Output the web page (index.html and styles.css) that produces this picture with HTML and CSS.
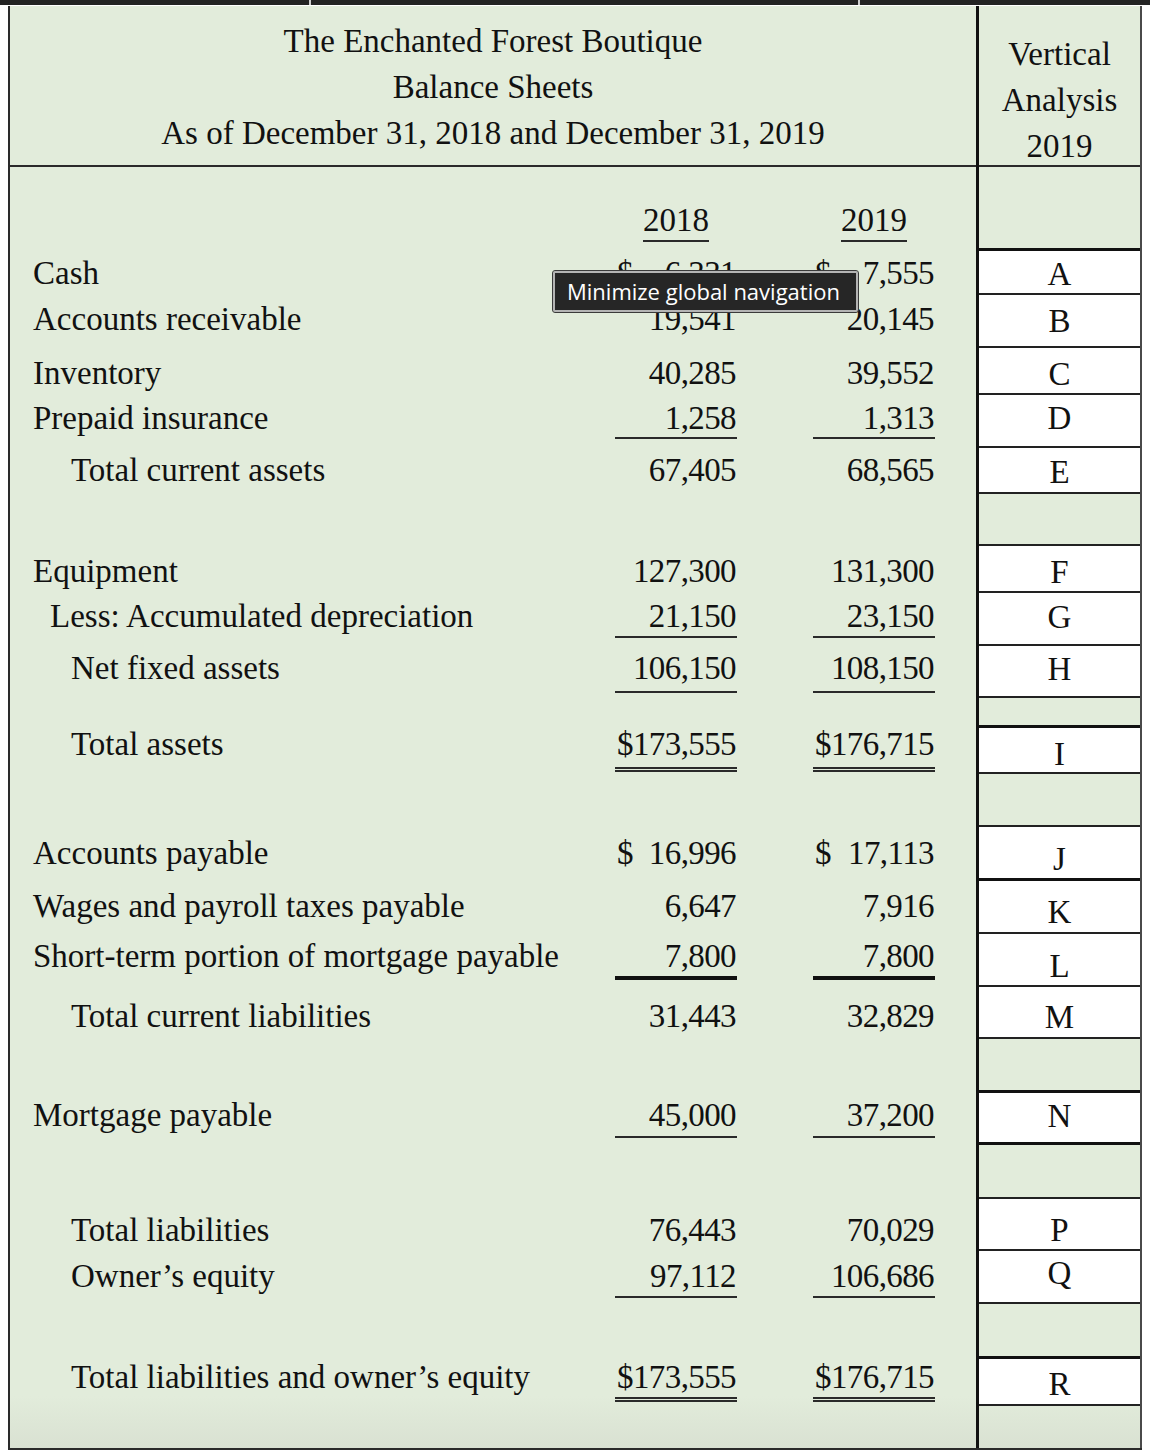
FILE: index.html
```html
<!DOCTYPE html>
<html lang="en">
<head>
<meta charset="utf-8">
<title>The Enchanted Forest Boutique – Balance Sheets</title>
<link rel="stylesheet" href="styles.css">
</head>
<body>
<div class="topbar"><div class="seg s1"></div><div class="seg s2"></div><div class="seg s3"></div></div>
<div class="sheet">
  <div class="main">
    <div class="head">
      <div>The Enchanted Forest Boutique</div>
      <div>Balance Sheets</div>
      <div>As of December 31, 2018 and December 31, 2019</div>
    </div>
    <div class="body">
      <div class="row mt35"><div class="year y18"><span>2018</span></div><div class="year y19"><span>2019</span></div></div>

      <div class="row mt14"><div class="label">Cash</div><div class="num y18 dl"><span>$</span><span>6,331</span></div><div class="num y19 dl"><span>$</span><span>7,555</span></div></div>
      <div class="row mt7"><div class="label">Accounts receivable</div><div class="num y18">19,541</div><div class="num y19">20,145</div></div>
      <div class="row mt15"><div class="label">Inventory</div><div class="num y18">40,285</div><div class="num y19">39,552</div></div>
      <div class="row mt6"><div class="label">Prepaid insurance</div><div class="num y18 ul pb1">1,258</div><div class="num y19 ul pb1">1,313</div></div>
      <div class="row mt13"><div class="label ind">Total current assets</div><div class="num y18">67,405</div><div class="num y19">68,565</div></div>

      <div class="row mt62"><div class="label">Equipment</div><div class="num y18">127,300</div><div class="num y19">131,300</div></div>
      <div class="row mt6"><div class="label ind-s">Less: Accumulated depreciation</div><div class="num y18 ul pb2">21,150</div><div class="num y19 ul pb2">23,150</div></div>
      <div class="row mt13"><div class="label ind">Net fixed assets</div><div class="num y18 ul pb5">106,150</div><div class="num y19 ul pb5">108,150</div></div>
      <div class="row mt37"><div class="label ind">Total assets</div><div class="num y18 dbl pb5">$173,555</div><div class="num y19 dbl pb5">$176,715</div></div>

      <div class="row mt70"><div class="label">Accounts payable</div><div class="num y18 dl"><span>$</span><span>16,996</span></div><div class="num y19 dl"><span>$</span><span>17,113</span></div></div>
      <div class="row mt14"><div class="label">Wages and payroll taxes payable</div><div class="num y18">6,647</div><div class="num y19">7,916</div></div>
      <div class="row mt11"><div class="label">Short-term portion of mortgage payable</div><div class="num y18 thick pb2">7,800</div><div class="num y19 thick pb2">7,800</div></div>
      <div class="row mt21"><div class="label ind">Total current liabilities</div><div class="num y18">31,443</div><div class="num y19">32,829</div></div>

      <div class="row mt60"><div class="label">Mortgage payable</div><div class="num y18 ul pb3">45,000</div><div class="num y19 ul pb3">37,200</div></div>

      <div class="row mt76"><div class="label ind">Total liabilities</div><div class="num y18">76,443</div><div class="num y19">70,029</div></div>
      <div class="row mt7"><div class="label ind">Owner’s equity</div><div class="num y18 ul pb2">97,112</div><div class="num y19 ul pb2">106,686</div></div>
      <div class="row mt62"><div class="label ind">Total liabilities and owner’s equity</div><div class="num y18 dbl pb2">$173,555</div><div class="num y19 dbl pb2">$176,715</div></div>
    </div>
  </div>

  <div class="va">
    <div class="va-head">
      <div>Vertical</div>
      <div>Analysis</div>
      <div>2019</div>
    </div>
    <div class="cell green thick-b"></div>
    <div class="cell pt5">A</div>
    <div class="cell pt8">B</div>
    <div class="cell pt8">C</div>
    <div class="cell pt5">D</div>
    <div class="cell pt6">E</div>
    <div class="cell green"></div>
    <div class="cell pt8">F</div>
    <div class="cell pt6">G</div>
    <div class="cell pt5">H</div>
    <div class="cell green thick-b"></div>
    <div class="cell pt8">I</div>
    <div class="cell green"></div>
    <div class="cell pt14 thick-b">J</div>
    <div class="cell pt13">K</div>
    <div class="cell pt14">L</div>
    <div class="cell pt12">M</div>
    <div class="cell green thick-b"></div>
    <div class="cell pt5 thick-b">N</div>
    <div class="cell green"></div>
    <div class="cell pt13">P</div>
    <div class="cell pt4">Q</div>
    <div class="cell green thick-b"></div>
    <div class="cell pt7">R</div>
    <div class="cell green last"></div>
  </div>

  <div class="tooltip">Minimize global navigation</div>
</div>
</body>
</html>
```

FILE: styles.css
```css
* { box-sizing: border-box; }

html, body {
  margin: 0;
  padding: 0;
  background: #ffffff;
}

body {
  width: 1150px;
  height: 1452px;
  overflow: hidden;
  font-family: "Liberation Serif", "Times New Roman", serif;
  color: #111111;
}

.topbar {
  display: flex;
  height: 5px;
  margin-bottom: 1px;
  gap: 2px;
  background: #cfcfcf;
}
.seg { background: #232323; height: 5px; }
.s1 { width: 309px; }
.s2 { width: 547px; }
.s3 { flex: 1; }

.sheet {
  position: relative;
  margin-left: 8px;
  width: 1134px;
  height: 1444px;
  display: flex;
  border-bottom: 2px solid #2a2a2a;
  background: linear-gradient(to bottom, #e2ecdb 0, #e2ecdb 1390px, #d9e1d2 100%);
}

/* ---------- left statement ---------- */
.main {
  width: 968px;
  border-left: 2px solid #2a2a2a;
  display: flex;
  flex-direction: column;
}

.head {
  height: 161px;
  border-bottom: 2px solid #2a2a2a;
  padding-top: 12px;
  text-align: center;
  font-size: 33px;
  line-height: 46px;
}

.body {
  font-size: 33px;
}

.row {
  display: grid;
  grid-template-columns: 605px 122px 76px 122px;
  height: 39px;
  line-height: 36px;
  align-items: start;
}

.mt6 { margin-top: 6px; }
.mt7 { margin-top: 7px; }
.mt11 { margin-top: 11px; }
.mt13 { margin-top: 13px; }
.mt14 { margin-top: 14px; }
.mt15 { margin-top: 15px; }
.mt21 { margin-top: 21px; }
.mt35 { margin-top: 35px; }
.mt37 { margin-top: 37px; }
.mt60 { margin-top: 60px; }
.mt62 { margin-top: 62px; }
.mt70 { margin-top: 70px; }
.mt76 { margin-top: 76px; }

.label {
  grid-column: 1;
  padding-left: 23px;
  white-space: nowrap;
}
.label.ind { padding-left: 61px; }
.label.ind-s { padding-left: 40px; }

.y18 { grid-column: 2; }
.y19 { grid-column: 4; }

.year {
  text-align: center;
}
.year span {
  display: inline-block;
  line-height: 33px;
  padding-bottom: 3px;
  border-bottom: 2px solid #2a2a2a;
}

.num {
  display: flex;
  justify-content: flex-end;
  padding-right: 1px;
  letter-spacing: -0.6px;
  white-space: nowrap;
}
.num.dl {
  justify-content: space-between;
  padding-left: 2px;
}

.ul { border-bottom: 2px solid #2a2a2a; }
.thick { border-bottom: 4px solid #111; }
.dbl { border-bottom: 5px double #2a2a2a; }
.pb1 { padding-bottom: 1px; }
.pb2 { padding-bottom: 2px; }
.pb3 { padding-bottom: 3px; }
.pb5 { padding-bottom: 5px; }

/* ---------- vertical analysis column ---------- */
.va {
  width: 166px;
  border-left: 3px solid #111;
  border-right: 2px solid #4a4a4a;
  display: grid;
  grid-template-rows: 161px 84px 44px 53px 47px 53px 46px 52px 47px 53px 52px 30px 46px 53px 54px 53px 53px 52px 54px 52px 54px 52px 53px 55px 47px 1fr;
  font-size: 33px;
}

.va-head {
  border-bottom: 2px solid #2a2a2a;
  padding-top: 25px;
  text-align: center;
  line-height: 46px;
}

.cell {
  background: #ffffff;
  border-bottom: 2px solid #222;
  text-align: center;
  line-height: 36px;
}
.cell.green { background: transparent; }
.cell.thick-b { border-bottom: 3px solid #111; }
.cell.last { border-bottom: none; }

.pt4 { padding-top: 4px; }
.pt5 { padding-top: 5px; }
.pt6 { padding-top: 6px; }
.pt7 { padding-top: 7px; }
.pt8 { padding-top: 8px; }
.pt12 { padding-top: 12px; }
.pt13 { padding-top: 13px; }
.pt14 { padding-top: 14px; }

/* ---------- tooltip ---------- */
.tooltip {
  position: absolute;
  left: 545px;
  top: 265px;
  width: 305px;
  height: 41px;
  background: #262626;
  border: 2px solid #b4b4b4;
  outline: 1px solid #3a3a3a;
  border-radius: 2px;
  color: #ffffff;
  font-family: "Open Sans", "Liberation Sans", sans-serif;
  font-size: 22px;
  line-height: 36px;
  padding-left: 12px;
  white-space: nowrap;
}
```
